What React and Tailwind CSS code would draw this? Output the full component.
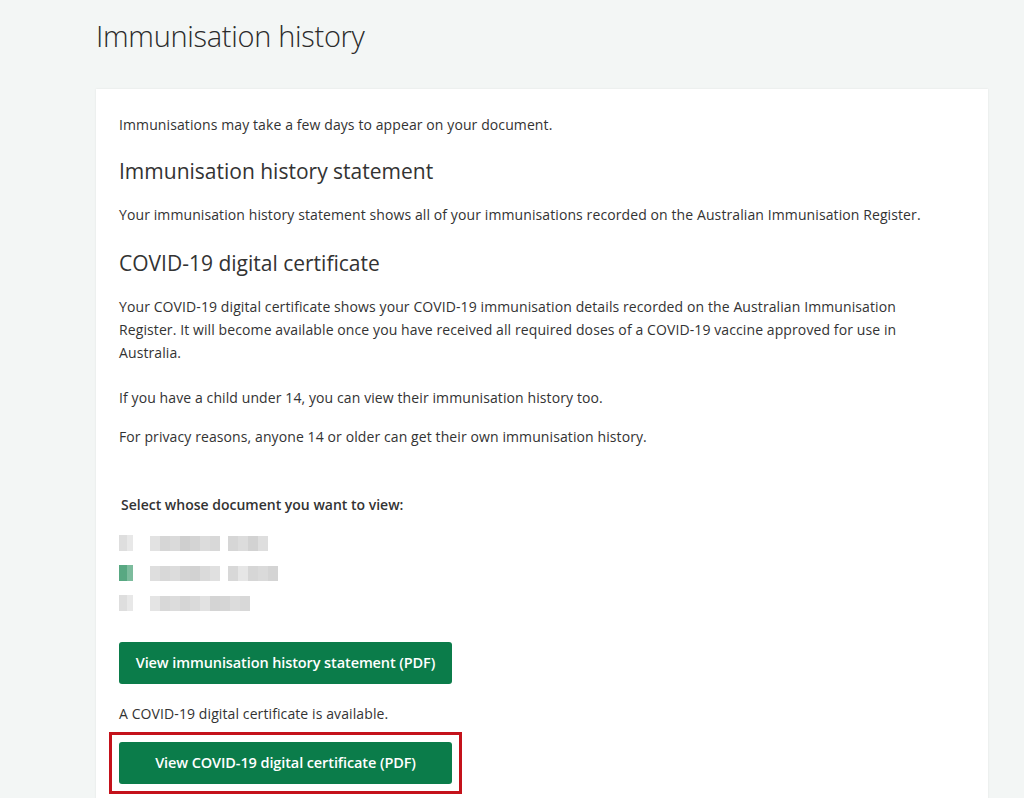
import React from "react";

const rows = [
  { sel: false, cells: ["#e2e2e2", "#d6d6d6", "#dadada", "#cfcfcf", "#d4d4d4", "#dcdcdc", "#d8d8d8", null, "#d6d6d6", "#dcdcdc", "#d2d2d2", "#dedede"] },
  { sel: true, cells: ["#dedede", "#d8d8d8", "#dcdcdc", "#d4d4d4", "#d2d2d2", "#dadada", "#e0e0e0", null, "#d8d8d8", "#e6e6e6", "#d6d6d6", "#dadada", "#d4d4d4"] },
  { sel: false, cells: ["#e4e4e4", "#d8d8d8", "#dcdcdc", "#d6d6d6", "#dadada", "#e2e2e2", "#d4d4d4", "#d6d6d6", "#dcdcdc", "#d8d8d8"] },
];

function Blurred({ cells, sel }) {
  return (
    <div className="flex items-center h-[20px]">
      <div className="flex items-center w-[20px]">
        <div className={`w-[8px] h-[16px] ${sel ? "bg-[#58a882]" : "bg-[#dedede]"}`} />
        <div className={`w-[6px] h-[16px] ${sel ? "bg-[#7cbc9d]" : "bg-[#e8e8e8]"}`} />
      </div>
      <div className="ml-[11px] flex items-center">
        {cells.map((c, i) =>
          c ? (
            <div key={i} style={{ backgroundColor: c }} className="w-[10px] h-[15px]" />
          ) : (
            <div key={i} className="w-[8px] h-[15px]" />
          )
        )}
      </div>
    </div>
  );
}

export default function App() {
  return (
    <div
      className="min-h-[798px] bg-[#f3f6f5] text-[#333] pl-[96px] pt-[17px]"
      style={{ fontFamily: '"Open Sans", "Noto Sans", sans-serif' }}
    >
      <h1 className="text-[29px] font-light leading-[38px] text-[#2b2b2b] tracking-[-0.3px]">
        Immunisation history
      </h1>
      <div className="mt-[34px] w-[892px] bg-white shadow-[0_0_2px_rgba(0,0,0,0.08)] pl-[23px] pr-[23px] pt-[25px] pb-[20px]">
        <p className="text-[14px] leading-[22px] tracking-[0.1px]">
          Immunisations may take a few days to appear on your document.
        </p>
        <h2 className="mt-[20px] text-[21px] leading-[30px] text-[#333]">
          Immunisation history statement
        </h2>
        <p className="mt-[18px] text-[14px] leading-[22px] tracking-[0.1px]">
          Your immunisation history statement shows all of your immunisations recorded on the Australian Immunisation Register.
        </p>
        <h2 className="mt-[22px] text-[21px] leading-[30px] text-[#333]">
          COVID-19 digital certificate
        </h2>
        <p className="mt-[17px] text-[14px] leading-[23px] tracking-[0.1px] max-w-[810px]">
          Your COVID-19 digital certificate shows your COVID-19 immunisation details recorded on the Australian Immunisation Register. It will become available once you have received all required doses of a COVID-19 vaccine approved for use in Australia.
        </p>
        <p className="mt-[23px] text-[14px] leading-[22px] tracking-[0.1px]">
          If you have a child under 14, you can view their immunisation history too.
        </p>
        <p className="mt-[17px] text-[14px] leading-[22px] tracking-[0.1px]">
          For privacy reasons, anyone 14 or older can get their own immunisation history.
        </p>
        <p className="mt-[46px] ml-[2px] text-[14px] leading-[22px] font-semibold text-[#333]">
          Select whose document you want to view:
        </p>
        <div className="mt-[17px] flex flex-col gap-[10px]">
          {rows.map((r, i) => (
            <Blurred key={i} cells={r.cells} sel={r.sel} />
          ))}
        </div>
        <button className="mt-[29px] w-[333px] h-[42px] rounded-[3px] bg-[#0b7c4a] text-white text-[14.5px] font-semibold tracking-[-0.1px]">
          View immunisation history statement (PDF)
        </button>
        <p className="mt-[19px] text-[14px] leading-[22px] tracking-[0.1px]">
          A COVID-19 digital certificate is available.
        </p>
        <div className="mt-[7px] -ml-[10px] w-[353px] border-[3px] border-[#c4121b] px-[7px] py-[7px]">
          <button className="w-[333px] h-[42px] rounded-[3px] bg-[#0b7c4a] text-white text-[14.5px] font-semibold tracking-[-0.1px]">
            View COVID-19 digital certificate (PDF)
          </button>
        </div>
      </div>
    </div>
  );
}
